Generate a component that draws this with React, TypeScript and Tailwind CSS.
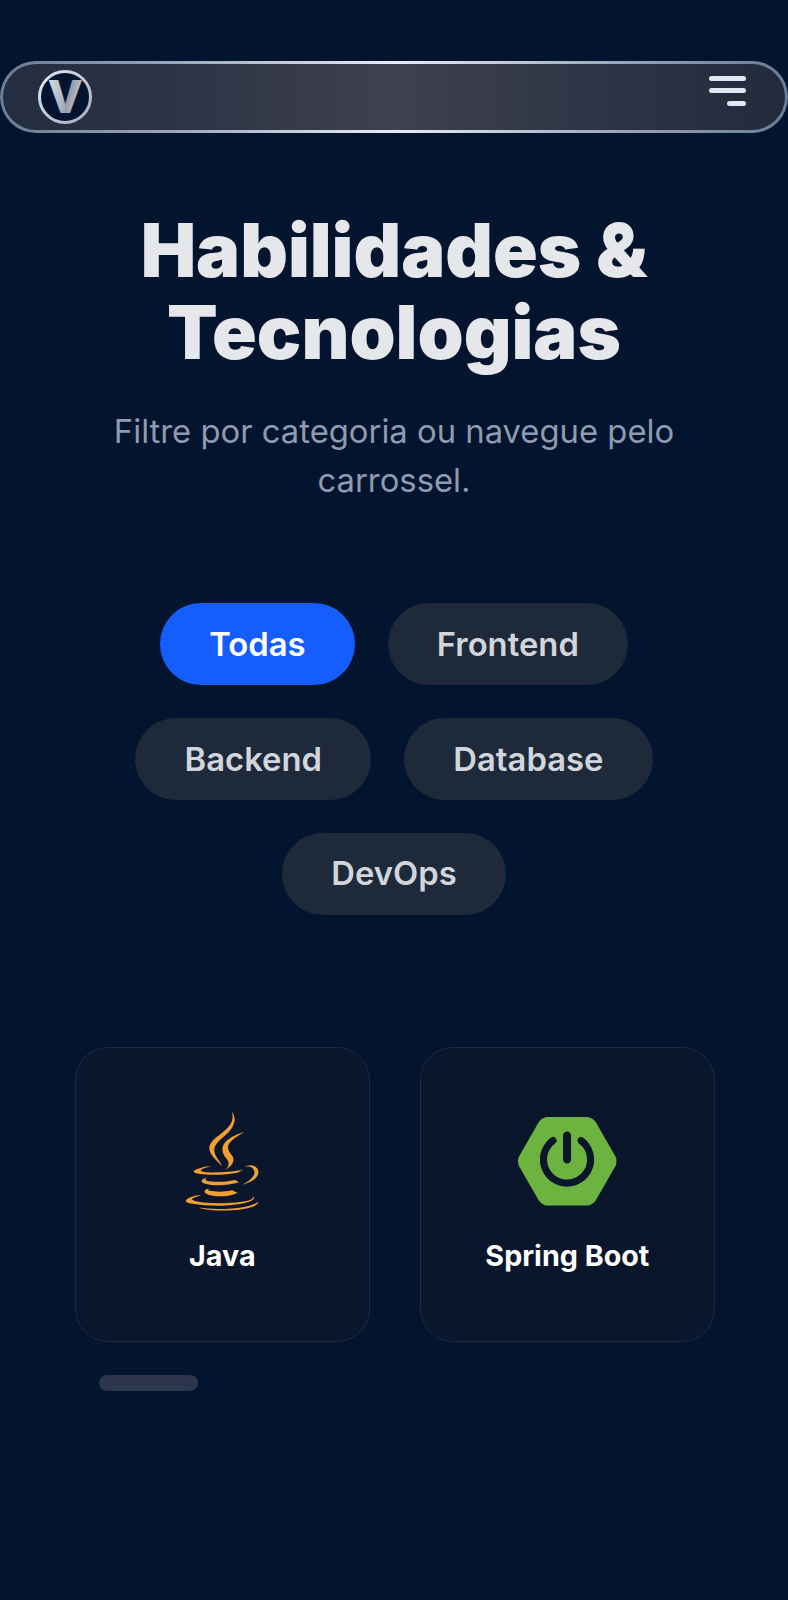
import React, { useState } from "react";
import { FaJava } from "react-icons/fa";
import { SiSpringboot } from "react-icons/si";

const categories = ["Todas", "Frontend", "Backend", "Database", "DevOps"];

const skills = [
  { name: "Java", icon: <FaJava className="size-[98.5px] text-[#f29f32]" /> },
  { name: "Spring Boot", icon: <SiSpringboot className="size-[98.5px] text-[#6db33f]" /> },
];

function Logo() {
  return (
    <svg viewBox="0 0 54 54" className="size-[54px]" role="img">
      <defs>
        <linearGradient id="ring" x1="0" y1="0" x2="1" y2="1">
          <stop offset="0" stopColor="#e2e8f0" />
          <stop offset="0.5" stopColor="#c3c9d6" />
          <stop offset="1" stopColor="#a3adc2" />
        </linearGradient>
        <linearGradient id="letter" x1="0" y1="0" x2="1" y2="0.4">
          <stop offset="0" stopColor="#d9dee5" />
          <stop offset="0.55" stopColor="#b0b7c2" />
          <stop offset="0.7" stopColor="#949daa" />
          <stop offset="1" stopColor="#c9ced7" />
        </linearGradient>
      </defs>
      <circle cx="27" cy="27" r="25.5" fill="#03142e" stroke="url(#ring)" strokeWidth="3" />
      <text x="27.3" y="43" textAnchor="middle" textLength="33" lengthAdjust="spacingAndGlyphs" fontSize="46" fontWeight="900" fontFamily="Roboto, sans-serif" fill="url(#letter)">V</text>
    </svg>
  );
}

function Header() {
  return (
    <header className="h-[72px] rounded-full bg-[linear-gradient(90deg,#6b7b93,#94a3b8_20%,#e8edf7_50%,#94a3b8_80%,#6b7b93)] p-[3px]">
      <div className="flex h-full items-start justify-between rounded-full bg-[linear-gradient(90deg,#242d3f,#2c3647_25%,#363a49_36%,#3e424e_50%,#363a49_64%,#2c3647_75%,#222b3c)] pt-[6px] pr-[39px] pl-[35px]">
        <Logo />
        <button aria-label="Menu" className="mt-[6px] flex flex-col items-end gap-[7.4px]">
          <span className="h-[5px] w-[37px] rounded-full bg-[#e2e8f0]" />
          <span className="h-[5px] w-[37px] rounded-full bg-[#e2e8f0]" />
          <span className="h-[5px] w-[19px] rounded-full bg-[#e2e8f0]" />
        </button>
      </div>
    </header>
  );
}

export default function App() {
  const [active, setActive] = useState("Todas");
  return (
    <div className="h-[1600px] overflow-hidden bg-[#03142e] pt-[61px] font-[Inter,sans-serif]">
      <Header />
      <main className="px-[74px] pt-[76px]">
        <h2 className="text-center text-[73.9px] leading-[82.1px] font-black text-[#e5e7eb]">
          Habilidades &amp;<br />Tecnologias
        </h2>
        <p className="mt-[33.6px] text-center text-[32.8px] leading-[49.25px] text-[#8e9bb0]">
          Filtre por categoria ou navegue pelo<br />carrossel.
        </p>
        <div className="mt-[98px] flex flex-wrap justify-center gap-[32.8px]">
          {categories.map((c) => (
            <button
              key={c}
              onClick={() => setActive(c)}
              className={
                "h-[82.1px] rounded-full px-[49.25px] text-[32.8px] leading-[49.25px] font-semibold " +
                (c === active ? "bg-[#155dfc] text-white" : "bg-[#1e2939] text-[#d1d5dc]")
              }
            >
              {c}
            </button>
          ))}
        </div>
        <div className="mt-[131.7px] ml-[0.6px] grid grid-cols-[295.5px_295.5px] gap-[49.5px]">
          {skills.map((s) => (
            <article
              key={s.name}
              className="flex h-[295px] flex-col items-center justify-center gap-[24.6px] rounded-[32.8px] border-[1.5px] border-[#202a3b] bg-[#0a162b]"
            >
              {s.icon}
              <h3 className="text-[28.7px] leading-[41px] font-bold text-white">{s.name}</h3>
            </article>
          ))}
        </div>
        <div className="mt-[32.8px] ml-[25px] h-[16.4px] w-[99px] rounded-full bg-[#2d364a]" />
      </main>
    </div>
  );
}
